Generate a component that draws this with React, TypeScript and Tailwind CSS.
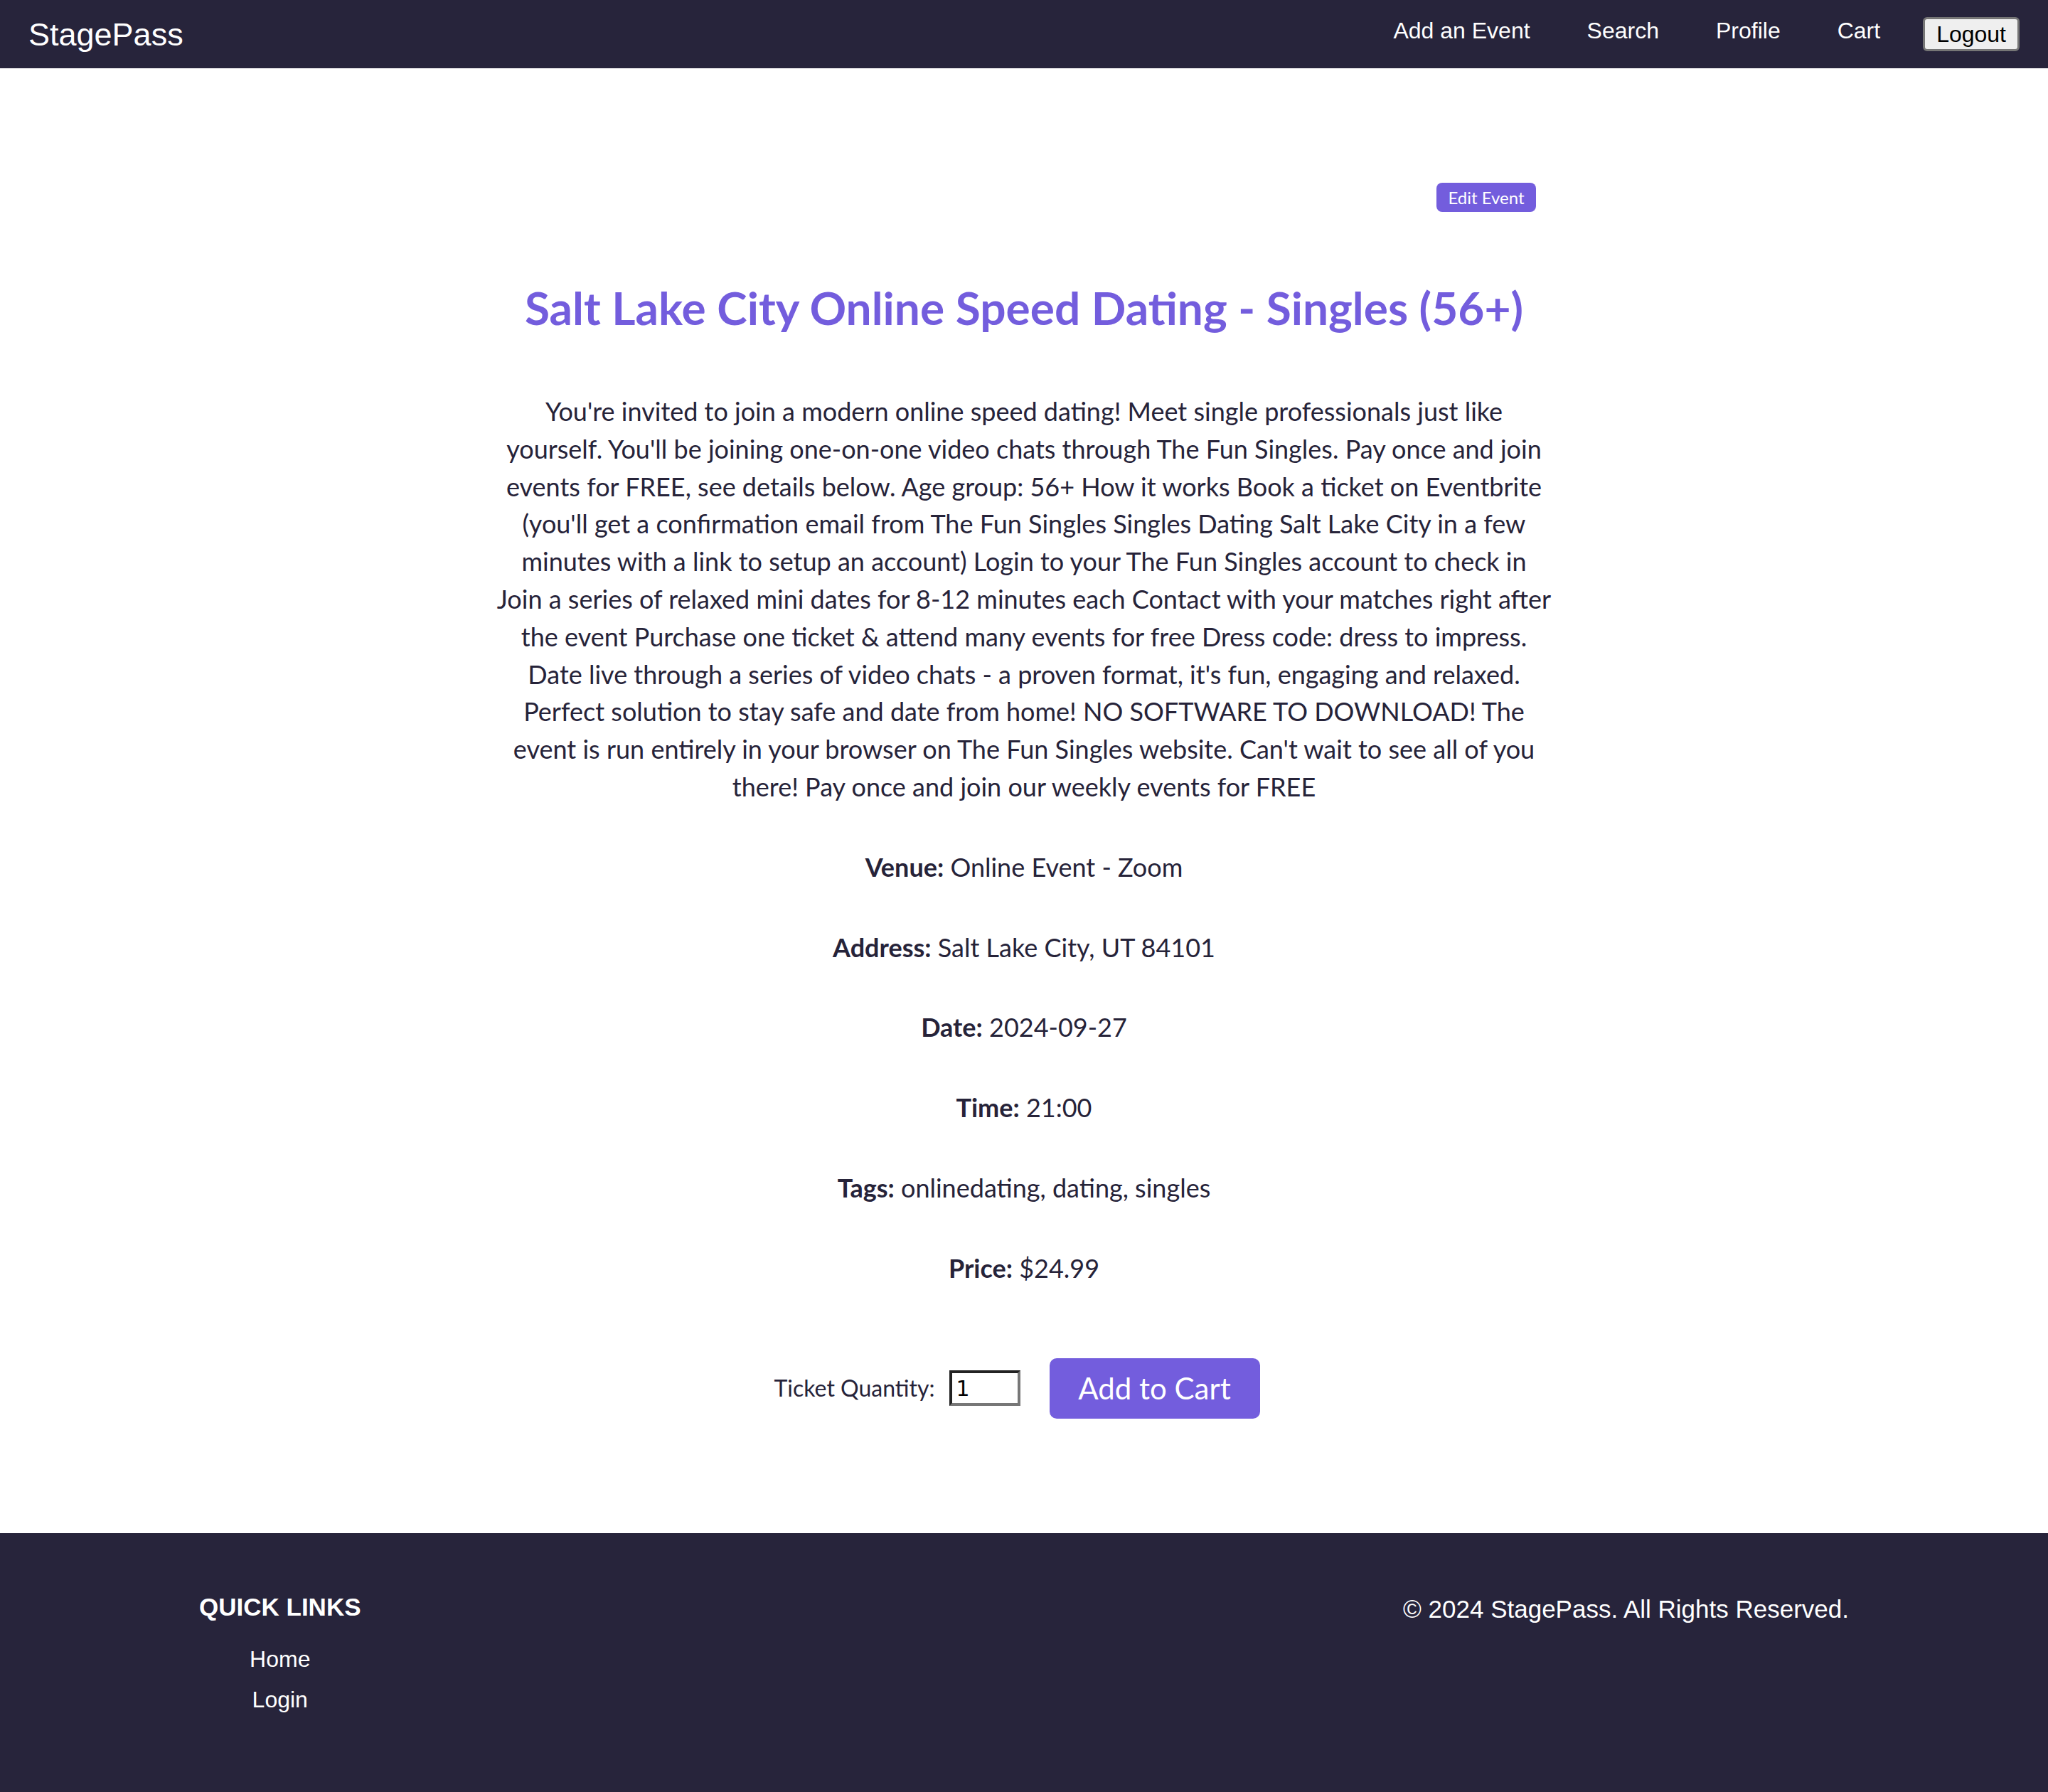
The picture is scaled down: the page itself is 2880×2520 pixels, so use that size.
import React from "react";

const lines = [
  "You're invited to join a modern online speed dating! Meet single professionals just like",
  "yourself. You'll be joining one-on-one video chats through The Fun Singles. Pay once and join",
  "events for FREE, see details below. Age group: 56+ How it works Book a ticket on Eventbrite",
  "(you'll get a confirmation email from The Fun Singles Singles Dating Salt Lake City in a few",
  "minutes with a link to setup an account) Login to your The Fun Singles account to check in",
  "Join a series of relaxed mini dates for 8-12 minutes each Contact with your matches right after",
  "the event Purchase one ticket & attend many events for free Dress code: dress to impress.",
  "Date live through a series of video chats - a proven format, it's fun, engaging and relaxed.",
  "Perfect solution to stay safe and date from home! NO SOFTWARE TO DOWNLOAD! The",
  "event is run entirely in your browser on The Fun Singles website. Can't wait to see all of you",
  "there! Pay once and join our weekly events for FREE",
];

const details: [string, string][] = [
  ["Venue:", "Online Event - Zoom"],
  ["Address:", "Salt Lake City, UT 84101"],
  ["Date:", "2024-09-27"],
  ["Time:", "21:00"],
  ["Tags:", "onlinedating, dating, singles"],
  ["Price:", "$24.99"],
];

export default function App() {
  return (
    <div className="min-h-[2520px] flex flex-col bg-white font-['Lato',sans-serif]">
      <nav className="h-[96px] bg-[#27243b] flex items-center justify-between px-[40px] font-['Liberation_Sans',Arial,sans-serif] text-white">
        <a className="text-[45px] leading-none">StagePass</a>
        <div className="flex items-center">
          <a className="text-[32px] leading-none pb-[10px]">Add an Event</a>
          <a className="text-[32px] leading-none pb-[10px] ml-[80px]">Search</a>
          <a className="text-[32px] leading-none pb-[10px] ml-[80px]">Profile</a>
          <a className="text-[32px] leading-none pb-[10px] ml-[80px]">Cart</a>
          <button className="ml-[60px] h-[48px] px-[16px] bg-[#efefef] text-black text-[32px] leading-none border-[3px] border-[#767676] rounded-[6px]">
            Logout
          </button>
        </div>
      </nav>

      <main className="pt-[161px] text-[#262339]">
        <div className="w-[1440px] mx-auto flex justify-end">
          <button className="h-[41px] w-[140px] bg-[#735ddd] text-white text-[24px] leading-none rounded-[8px]">
            Edit Event
          </button>
        </div>
        <h1 className="mt-[98px] text-center text-[64px] leading-[74px] font-bold text-[#735ddd]">
          Salt Lake City Online Speed Dating - Singles (56+)
        </h1>
        <p className="mt-[82px] mx-auto w-[1640px] text-center text-[36px] leading-[52.8px]">
          {lines.map((l, i) => (
            <React.Fragment key={i}>
              {l}
              {i < lines.length - 1 && <br />}
            </React.Fragment>
          ))}
        </p>
        {details.map(([k, v]) => (
          <p key={k} className="mt-[60px] text-center text-[36px] leading-[52.8px]">
            <span className="font-bold">{k}</span> {v}
          </p>
        ))}
        <div className="mt-[100px] flex items-center justify-center pr-[20px]">
          <label className="text-[32px] text-[#262339]">Ticket Quantity:</label>
          <input
            type="number"
            defaultValue={1}
            className="ml-[20px] w-[100px] h-[50px] border-[4px] border-t-[#222] border-l-[#222] border-b-[#777] border-r-[#777] px-[6px] text-[30px] text-black font-['DejaVu_Sans',sans-serif] outline-none"
          />
          <button className="ml-[41px] h-[85px] w-[296px] bg-[#735ddd] text-white text-[42px] rounded-[10px]">
            Add to Cart
          </button>
        </div>
      </main>

      <footer className="mt-[161px] flex-1 bg-[#27243b] text-white font-['Liberation_Sans',Arial,sans-serif]">
        <div className="mx-[280px] pt-[83px] flex justify-between items-start">
          <div className="flex flex-col items-center">
            <h3 className="text-[35px] leading-[42px] font-bold">QUICK LINKS</h3>
            <a className="mt-[32px] text-[32px] leading-[40px]">Home</a>
            <a className="mt-[17px] text-[32px] leading-[40px]">Login</a>
          </div>
          <p className="pt-[3px] text-[35px] leading-[42px]">© 2024 StagePass. All Rights Reserved.</p>
        </div>
      </footer>
    </div>
  );
}
